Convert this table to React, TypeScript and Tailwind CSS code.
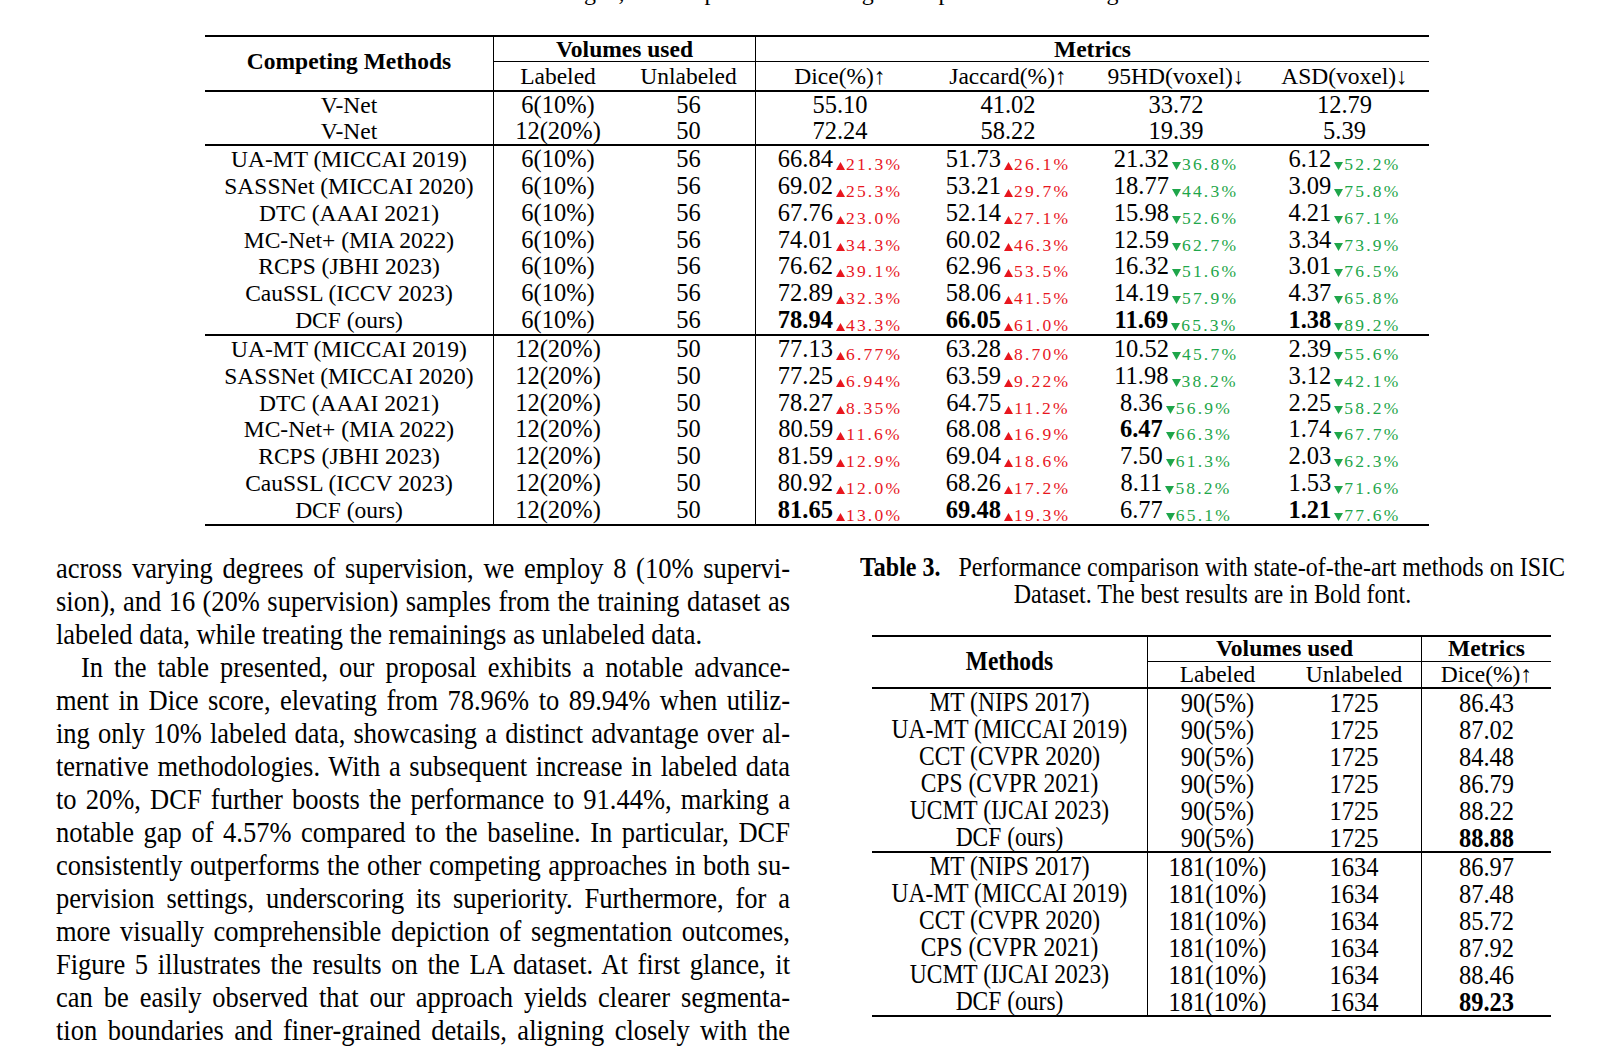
import React from "react";

type Metric = [string, string, boolean?];
type Row1 = { name: string; lab: string; unl: string; m: Metric[] };

function Tri({ up }: { up: boolean }) {
  return (
    <svg width="9" height="8" viewBox="0 0 9 8" className="inline-block mr-[1px]">
      <polygon points={up ? "4.5,0 9,8 0,8" : "0,0 9,0 4.5,8"} fill="currentColor" />
    </svg>
  );
}

function Delta({ v, up }: { v: string; up: boolean }) {
  return (
    <span
      className={
        up
          ? "ml-[3px] text-[17.5px] tracking-[2.2px] leading-none align-[-3px] text-[#e8161e]"
          : "ml-[3px] text-[17.5px] tracking-[2.2px] leading-none align-[-3px] text-[#1ea64a]"
      }
    >
      <Tri up={up} />
      {v}
    </span>
  );
}

function MetricCell({ m, up }: { m: Metric; up: boolean }) {
  const [v, d, b] = m;
  return (
    <div className="text-center text-[24.5px] whitespace-nowrap">
      {b ? <span className="font-bold">{v}</span> : <span>{v}</span>}
      {d ? <Delta v={d} up={up} /> : null}
    </div>
  );
}

function T1Row({ r, h }: { r: Row1; h: "a" | "b" }) {
  return (
    <div
      className={
        h === "a"
          ? "grid grid-cols-[289px_128px_134px_168px_168px_168px_169px] h-[26px] leading-[26px]"
          : "grid grid-cols-[289px_128px_134px_168px_168px_168px_169px] h-[26.85px] leading-[26.85px]"
      }
    >
      <div className="border-r border-black text-center text-[23.5px] whitespace-nowrap">{r.name}</div>
      <div className="text-center text-[24.5px]">{r.lab}</div>
      <div className="border-r border-black text-center text-[24.5px]">{r.unl}</div>
      <MetricCell m={r.m[0]} up={true} />
      <MetricCell m={r.m[1]} up={true} />
      <MetricCell m={r.m[2]} up={false} />
      <MetricCell m={r.m[3]} up={false} />
    </div>
  );
}

const g1: Row1[] = [
  { name: "V-Net", lab: "6(10%)", unl: "56", m: [["55.10", ""], ["41.02", ""], ["33.72", ""], ["12.79", ""]] },
  { name: "V-Net", lab: "12(20%)", unl: "50", m: [["72.24", ""], ["58.22", ""], ["19.39", ""], ["5.39", ""]] },
];

const mk = (lab: string, unl: string, rows: [string, Metric[]][]): Row1[] =>
  rows.map(([name, m]) => ({ name, lab, unl, m }));

const g2 = mk("6(10%)", "56", [
  ["UA-MT (MICCAI 2019)", [["66.84", "21.3%"], ["51.73", "26.1%"], ["21.32", "36.8%"], ["6.12", "52.2%"]]],
  ["SASSNet (MICCAI 2020)", [["69.02", "25.3%"], ["53.21", "29.7%"], ["18.77", "44.3%"], ["3.09", "75.8%"]]],
  ["DTC (AAAI 2021)", [["67.76", "23.0%"], ["52.14", "27.1%"], ["15.98", "52.6%"], ["4.21", "67.1%"]]],
  ["MC-Net+ (MIA 2022)", [["74.01", "34.3%"], ["60.02", "46.3%"], ["12.59", "62.7%"], ["3.34", "73.9%"]]],
  ["RCPS (JBHI 2023)", [["76.62", "39.1%"], ["62.96", "53.5%"], ["16.32", "51.6%"], ["3.01", "76.5%"]]],
  ["CauSSL (ICCV 2023)", [["72.89", "32.3%"], ["58.06", "41.5%"], ["14.19", "57.9%"], ["4.37", "65.8%"]]],
  ["DCF (ours)", [["78.94", "43.3%", true], ["66.05", "61.0%", true], ["11.69", "65.3%", true], ["1.38", "89.2%", true]]],
]);

const g3 = mk("12(20%)", "50", [
  ["UA-MT (MICCAI 2019)", [["77.13", "6.77%"], ["63.28", "8.70%"], ["10.52", "45.7%"], ["2.39", "55.6%"]]],
  ["SASSNet (MICCAI 2020)", [["77.25", "6.94%"], ["63.59", "9.22%"], ["11.98", "38.2%"], ["3.12", "42.1%"]]],
  ["DTC (AAAI 2021)", [["78.27", "8.35%"], ["64.75", "11.2%"], ["8.36", "56.9%"], ["2.25", "58.2%"]]],
  ["MC-Net+ (MIA 2022)", [["80.59", "11.6%"], ["68.08", "16.9%"], ["6.47", "66.3%", true], ["1.74", "67.7%"]]],
  ["RCPS (JBHI 2023)", [["81.59", "12.9%"], ["69.04", "18.6%"], ["7.50", "61.3%"], ["2.03", "62.3%"]]],
  ["CauSSL (ICCV 2023)", [["80.92", "12.0%"], ["68.26", "17.2%"], ["8.11", "58.2%"], ["1.53", "71.6%"]]],
  ["DCF (ours)", [["81.65", "13.0%", true], ["69.48", "19.3%", true], ["6.77", "65.1%"], ["1.21", "77.6%", true]]],
]);

type Row3 = [string, string, string, string, boolean?];
const t3a: Row3[] = [
  ["MT (NIPS 2017)", "90(5%)", "1725", "86.43"],
  ["UA-MT (MICCAI 2019)", "90(5%)", "1725", "87.02"],
  ["CCT (CVPR 2020)", "90(5%)", "1725", "84.48"],
  ["CPS (CVPR 2021)", "90(5%)", "1725", "86.79"],
  ["UCMT (IJCAI 2023)", "90(5%)", "1725", "88.22"],
  ["DCF (ours)", "90(5%)", "1725", "88.88", true],
];
const t3b: Row3[] = [
  ["MT (NIPS 2017)", "181(10%)", "1634", "86.97"],
  ["UA-MT (MICCAI 2019)", "181(10%)", "1634", "87.48"],
  ["CCT (CVPR 2020)", "181(10%)", "1634", "85.72"],
  ["CPS (CVPR 2021)", "181(10%)", "1634", "87.92"],
  ["UCMT (IJCAI 2023)", "181(10%)", "1634", "88.46"],
  ["DCF (ours)", "181(10%)", "1634", "89.23", true],
];

/* the lower half of the page is set in a slightly condensed (taller) face */
function Tall({ children, bold }: { children: React.ReactNode; bold?: boolean }) {
  return <span className={bold ? "inline-block scale-y-112 font-bold" : "inline-block scale-y-112"}>{children}</span>;
}

function T3Row({ r }: { r: Row3 }) {
  return (
    <div className="grid grid-cols-[276px_139px_135px_129px] h-[27px] leading-[27px]">
      <div className="border-r border-black text-center text-[23.5px] whitespace-nowrap">
        <Tall>{r[0]}</Tall>
      </div>
      <div className="text-center text-[24.5px]">
        <Tall>{r[1]}</Tall>
      </div>
      <div className="border-r border-black text-center text-[24.5px]">
        <Tall>{r[2]}</Tall>
      </div>
      <div className="text-center text-[24.5px]">
        <Tall bold={r[4]}>{r[3]}</Tall>
      </div>
    </div>
  );
}

function Line({ children, last, indent }: { children: React.ReactNode; last?: boolean; indent?: boolean }) {
  let cls = "scale-y-112 text-justify [text-align-last:justify]";
  if (last) cls = "scale-y-112 text-left";
  if (indent) cls = "scale-y-112 text-justify [text-align-last:justify] indent-[25px]";
  return <div className={cls}>{children}</div>;
}

export default function App() {
  return (
    <div className="relative w-[1618px] h-[1046px] overflow-hidden bg-white text-black font-['Liberation_Serif',serif]">
      {/* clipped caption line from above */}
      <div className="h-[35px] overflow-hidden">
        <div className="-mt-[20px] pl-[420px] text-[24px] leading-[24px] whitespace-nowrap">
          Results are averaged, with improvement over generic performance and gains.
        </div>
      </div>

      {/* Table 2 */}
      <div className="ml-[205px] w-[1224px] border-t-2 border-b-2 border-black">
        <div className="grid grid-cols-[289px_128px_134px_168px_168px_168px_169px] grid-rows-[25px_28px] border-b-2 border-black text-[23.5px]">
          <div className="row-span-2 border-r border-black flex items-center justify-center pb-[4px] font-bold">
            Competing Methods
          </div>
          <div className="col-span-2 border-r border-b border-black text-center font-bold leading-[24px]">Volumes used</div>
          <div className="col-span-4 border-b border-black text-center font-bold leading-[24px]">Metrics</div>
          <div className="text-center leading-[28px]">Labeled</div>
          <div className="border-r border-black text-center leading-[28px]">Unlabeled</div>
          <div className="text-center leading-[28px]">Dice(%)↑</div>
          <div className="text-center leading-[28px]">Jaccard(%)↑</div>
          <div className="text-center leading-[28px]">95HD(voxel)↓</div>
          <div className="text-center leading-[28px]">ASD(voxel)↓</div>
        </div>
        <div className="border-b-2 border-black">
          {g1.map((r, i) => (
            <T1Row key={i} r={r} h="a" />
          ))}
        </div>
        <div className="border-b-2 border-black">
          {g2.map((r, i) => (
            <T1Row key={i} r={r} h="b" />
          ))}
        </div>
        <div>
          {g3.map((r, i) => (
            <T1Row key={i} r={r} h="b" />
          ))}
        </div>
      </div>

      <div className="flex">
        {/* body text */}
        <div className="ml-[56px] mt-[26px] w-[734px] text-[26.5px] leading-[33px]">
          <Line>across varying degrees of supervision, we employ 8 (10% supervi-</Line>
          <Line>sion), and 16 (20% supervision) samples from the training dataset as</Line>
          <Line last>labeled data, while treating the remainings as unlabeled data.</Line>
          <Line indent>In the table presented, our proposal exhibits a notable advance-</Line>
          <Line>ment in Dice score, elevating from 78.96% to 89.94% when utiliz-</Line>
          <Line>ing only 10% labeled data, showcasing a distinct advantage over al-</Line>
          <Line>ternative methodologies. With a subsequent increase in labeled data</Line>
          <Line>to 20%, DCF further boosts the performance to 91.44%, marking a</Line>
          <Line>notable gap of 4.57% compared to the baseline. In particular, DCF</Line>
          <Line>consistently outperforms the other competing approaches in both su-</Line>
          <Line>pervision settings, underscoring its superiority. Furthermore, for a</Line>
          <Line>more visually comprehensible depiction of segmentation outcomes,</Line>
          <Line>Figure 5 illustrates the results on the LA dataset. At first glance, it</Line>
          <Line>can be easily observed that our approach yields clearer segmenta-</Line>
          <Line>tion boundaries and finer-grained details, aligning closely with the</Line>
        </div>

        {/* right column */}
        <div className="ml-[68px] mt-[28px] w-[709px]">
          <div className="text-[24px] leading-[27px] text-center whitespace-nowrap">
            <div className="scale-y-112">
              <span className="font-bold">Table 3.</span>
              <span className="ml-[18px]">Performance comparison with state-of-the-art methods on ISIC</span>
            </div>
            <div className="scale-y-112">Dataset. The best results are in Bold font.</div>
          </div>

          <div className="mt-[27px] ml-[14px] w-[679px] border-t-2 border-b-2 border-black">
            <div className="grid grid-cols-[276px_139px_135px_129px] grid-rows-[25px_25px] border-b-2 border-black text-[23.5px]">
              <div className="row-span-2 border-r border-black flex items-center justify-center font-bold">
                <Tall>Methods</Tall>
              </div>
              <div className="col-span-2 border-r border-b border-black text-center font-bold leading-[23px]">
                Volumes used
              </div>
              <div className="border-b border-black text-center font-bold leading-[23px]">Metrics</div>
              <div className="text-center leading-[25px]">Labeled</div>
              <div className="border-r border-black text-center leading-[25px]">Unlabeled</div>
              <div className="text-center leading-[25px]">Dice(%)↑</div>
            </div>
            <div className="border-b-2 border-black">
              {t3a.map((r, i) => (
                <T3Row key={i} r={r} />
              ))}
            </div>
            <div>
              {t3b.map((r, i) => (
                <T3Row key={i} r={r} />
              ))}
            </div>
          </div>
        </div>
      </div>
    </div>
  );
}
